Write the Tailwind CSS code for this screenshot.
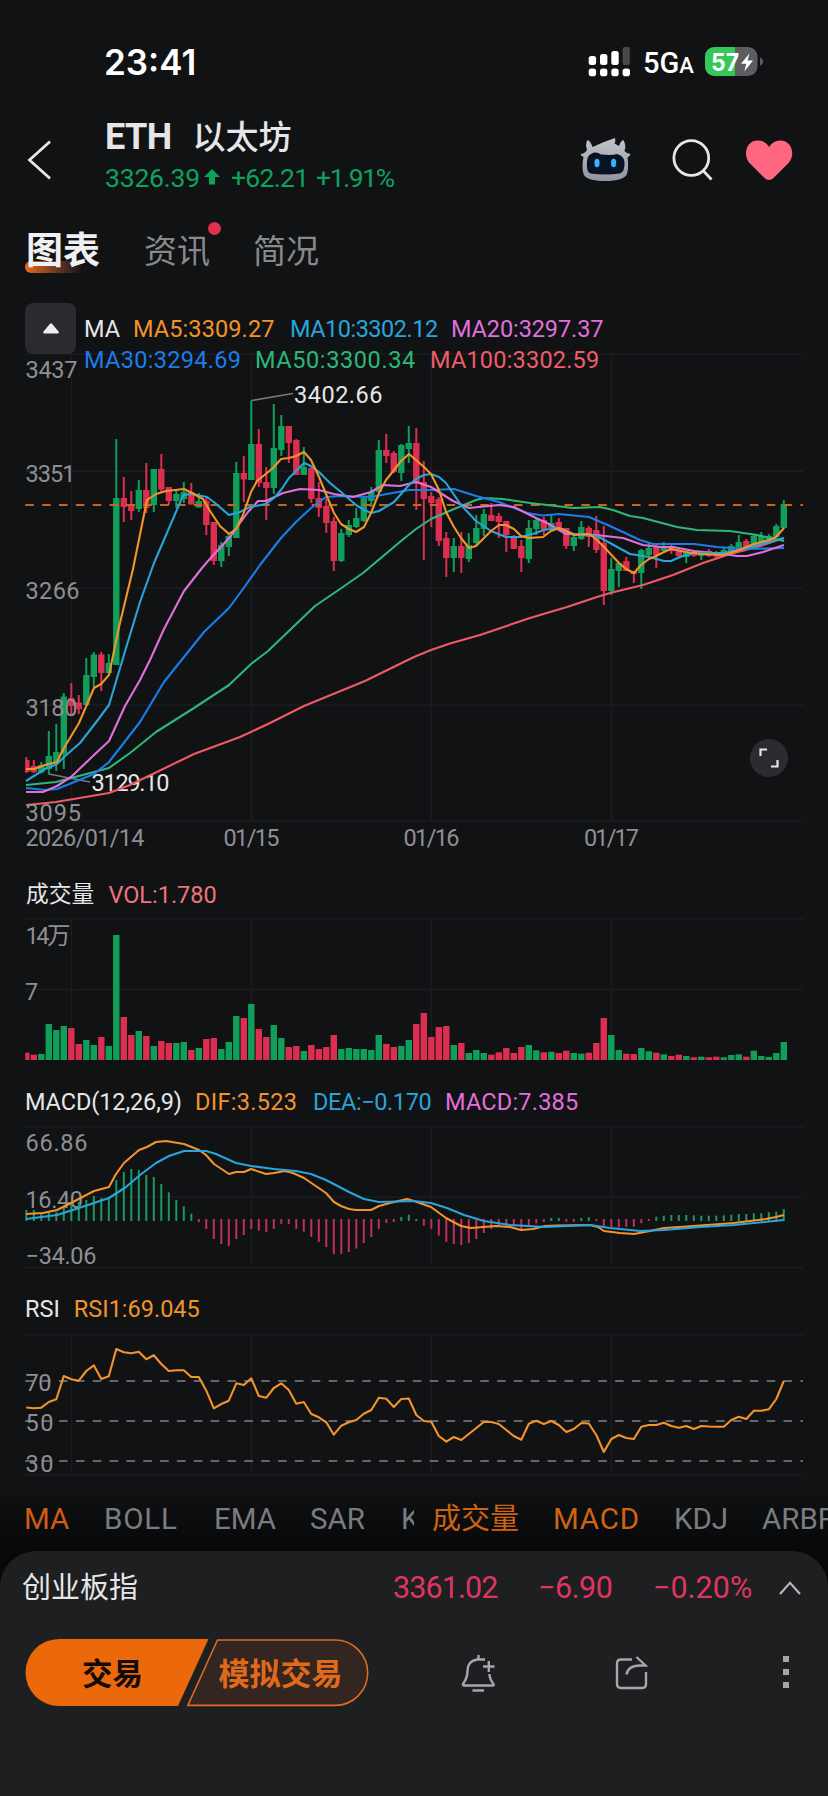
<!DOCTYPE html>
<html lang="zh-CN">
<head>
  <meta charset="UTF-8" />
  <meta name="viewport" content="width=device-width, initial-scale=1" />
  <title>ETH 以太坊</title>
  <script src="https://cdn.jsdelivr.net/npm/@tailwindcss/browser@4"></script>
</head>
<body class="bg-[#111214]">
  <div class="w-[828px] h-[1796px] overflow-hidden flex flex-col bg-[#111214] text-[#e6e6e8] font-['Roboto','Noto_Sans_CJK_SC',sans-serif]">

    <!-- Status bar -->
    <div class="h-[100px] shrink-0 flex items-center justify-between pl-[104px] pr-[64px] pt-[24px] text-white">
      <span class="font-['Inter',sans-serif] font-semibold text-[35px] leading-none">23:41</span>
      <div class="flex items-center">
        <svg class="w-[42px] h-[30px]" viewBox="589 47 42 30" fill="#fff">
          <rect x="589.7" y="56" width="7.4" height="9" rx="2.5" />
          <rect x="601" y="54" width="7.4" height="11" rx="2.5" />
          <rect x="612.3" y="51" width="7.4" height="14" rx="2.5" />
          <rect x="623.6" y="47" width="7.2" height="18" rx="2" fill="#47484a" />
          <rect x="589.7" y="68.6" width="7.4" height="7.6" rx="2.8" />
          <rect x="601" y="68.6" width="7.4" height="7.6" rx="2.8" />
          <rect x="612.3" y="68.6" width="7.4" height="7.6" rx="2.8" />
          <rect x="623.6" y="68.6" width="7.4" height="7.6" rx="2.8" />
        </svg>
        <span class="ml-[13px] w-[61px] font-medium text-[29px] leading-none whitespace-nowrap pt-[2px]">5G<span class="text-[22px]">A</span></span>
        <svg class="w-[60px] h-[30px]" viewBox="704 47 60 30">
          <rect x="705" y="47" width="52.5" height="29" rx="9.5" fill="#5c5d60" />
          <path d="M714.5 47H735V76H714.5A9.5 9.5 0 0 1 705 66.500V56.500A9.5 9.5 0 0 1 714.500 47Z" fill="#34c759" />
          <path d="M760 57.500Q763 58.500 763 61.500T760 65.500Z" fill="#5c5d60" />
          <text x="711" y="70.500" font-family="Inter" font-weight="700" font-size="24" fill="#fff" textLength="28" lengthAdjust="spacingAndGlyphs">57</text>
          <path d="M749.500 53.500L741 63.800H746.300L744.300 71.500L753 60.500H747.500Z" fill="#fff" />
        </svg>
      </div>
    </div>

    <!-- Header -->
    <header class="h-[110px] shrink-0 flex pl-[27px] pr-[35px]">
      <svg class="w-[24px] h-[40px] mt-[39.500px]" viewBox="0 0 24 40" fill="none" stroke="#e6e6e8" stroke-width="2.800"><path d="M23 1.500L2.500 20L23 38.500" /></svg>
      <div class="ml-[54px] pt-[18px]">
        <h1 class="flex items-center h-[38px] text-[36px] leading-none font-bold tracking-[-0.6px]">ETH<span class="ml-[21px] text-[33px] font-medium tracking-normal">以太坊</span></h1>
        <div class="flex items-center h-[36px] mt-[4px] text-[26.500px] leading-none text-[#0ea25f]">
          <span class="w-[99px] tracking-[-0.2px]">3326.39</span>
          <svg class="w-[16px] h-[16px] mb-[2px]" viewBox="0 0 16 16" fill="#0ea25f"><path d="M8 0L16 8H11V15.500H5V8H0Z" /></svg>
          <span class="ml-[11px] w-[85px] tracking-[-0.7px]">+62.21</span>
          <span class="tracking-[-1.4px]">+1.91%</span>
        </div>
      </div>
      <div class="ml-auto flex items-start">
        <svg class="w-[52px] h-[46px] mt-[37px]" viewBox="580 137 52 46">
          <defs>
            <linearGradient id="shell" x1="0" y1="0" x2="0" y2="1"><stop offset="0" stop-color="#c3c5cb" /><stop offset="1" stop-color="#8f949f" /></linearGradient>
          </defs>
          <path d="M587 150Q585 144 587.500 140Q590.500 141 592.500 147Q603 142 615 138Q616 141 614.500 143.500L619 146Q620.500 141 623.500 140Q626.500 146 624.500 151Q627 154 630.500 154Q629.500 157 627.500 157.500Q629 167 627 174Q624 181 605 181T583.500 174Q581.500 166 583.500 157Q581.500 156.500 580.500 154Q584.500 154 587 150Z" fill="url(#shell)" />
          <path d="M591 154Q596 151 601 154.500Q612 155.500 617 154Q624 156 624.500 162Q625 172 620 173.500Q605 175.500 590.500 173.500Q586 172 587 162Q587 156 591 154Z" fill="#0a1226" />
          <ellipse cx="597" cy="163" rx="2.600" ry="4.200" fill="#38b4f4" />
          <ellipse cx="613.600" cy="163" rx="2.600" ry="4.200" fill="#38b4f4" />
        </svg>
        <svg class="w-[42px] h-[42px] ml-[40px] mt-[39px]" viewBox="672 139 42 42" fill="none" stroke="#e6e6e8" stroke-width="2.800"><circle cx="691.300" cy="158" r="17.400" /><path d="M703 170.500L711.500 179.500" /></svg>
        <svg class="w-[48px] h-[41px] ml-[31px] mt-[40px]" viewBox="745 140 48 41" fill="#ff6680"><path d="M769 180Q766.500 180 764 177.500L749 162.500C743.500 156 745 140.500 758 140.500Q765 140.500 769 147Q773 140.500 780 140.500C793 140.500 795 156 789 162.500L774 177.500Q771.500 180 769 180Z" /></svg>
      </div>
    </header>

    <!-- Tabs -->
    <nav class="h-[80px] shrink-0 flex items-start pl-[25px] pt-[24px] text-[33px] leading-[36px] text-[#88898c]">
      <div class="relative w-[119px] text-[37px] font-bold text-[#f0f0f2]">
        <span class="absolute left-0 top-[27px] w-[58px] h-[12px] rounded-l-md bg-linear-to-r from-[#e96a10] to-[#111214]"></span>
        <span class="relative pl-[1px]">图表</span>
      </div>
      <div class="relative w-[109px]">资讯<span class="absolute left-[64px] -top-[12px] size-[13px] rounded-full bg-[#e32f4f]"></span></div>
      <div>简况</div>
    </nav>

    <!-- Candles + MA -->
    <section class="shrink-0 h-[582px]">
      <div class="relative z-10 h-[87px] pt-[13px] pl-[25px] flex text-[23.500px] leading-[31px]">
        <button class="size-[51px] rounded-lg bg-[#2a2b31] flex items-center justify-center">
          <svg class="w-[16px] h-[11px]" viewBox="0 0 16 11" fill="#eceef0"><path d="M7 .7Q8 -.3 9 .7L15.500 8.500Q16.500 10.500 14.500 10.500H1.500Q-.5 10.500.5 8.500Z" /></svg>
        </button>
        <div class="ml-[8px] pt-[11px] whitespace-nowrap">
          <div class="flex">
            <span class="w-[49px]">MA</span><span class="w-[157px] text-[#f2932c] tracking-[0.1px]">MA5:3309.27</span><span class="w-[161px] text-[#28a5da] tracking-[-0.5px]">MA10:3302.12</span><span class="text-[#e070dc] tracking-[-0.1px]">MA20:3297.37</span>
          </div>
          <div class="flex">
            <span class="w-[171px] text-[#1a7ee8] tracking-[0.3px]">MA30:3294.69</span><span class="w-[175px] text-[#2cb878] tracking-[0.600px]">MA50:3300.34</span><span class="text-[#ee5d68] tracking-[0.200px]">MA100:3302.59</span>
          </div>
        </div>
      </div>
      <div class="relative -mt-[32px]">
        <svg id="price" class="block w-[828px] h-[527px]" viewBox="0 345 828 527"></svg>
        <button class="absolute left-[750px] top-[394px] size-[38px] rounded-full bg-[#2b2c2f] flex items-center justify-center">
          <svg class="w-[20px] h-[20px]" viewBox="0 0 20 20" fill="none" stroke="#e6e6e8" stroke-width="2.200"><path d="M1.500 8V1.500H8M18.500 12V18.500H12" /></svg>
        </button>
      </div>
    </section>

    <!-- Volume -->
    <section class="shrink-0">
      <div class="h-[45px] flex items-center gap-[14px] pl-[26px] pt-[2px] text-[23.500px] leading-none">
        <span class="text-[22.800px]">成交量</span><span class="text-[#ee737d]">VOL:1.780</span>
      </div>
      <svg id="volume" class="block w-[828px] h-[162px]" viewBox="0 917 828 162"></svg>
    </section>

    <!-- MACD -->
    <section class="shrink-0">
      <div class="h-[45px] flex items-center pl-[25px] pt-[2px] text-[23.500px] leading-none whitespace-nowrap">
        <span class="w-[170px] tracking-[-0.1px]">MACD(12,26,9)</span><span class="w-[118px] text-[#f2932c] tracking-[0.300px]">DIF:3.523</span><span class="w-[132px] text-[#28a5da] tracking-[-0.400px]">DEA:−0.170</span><span class="text-[#e070dc] tracking-[0.200px]">MACD:7.385</span>
      </div>
      <svg id="macd" class="block w-[828px] h-[163px]" viewBox="0 1124 828 163"></svg>
    </section>

    <!-- RSI -->
    <section class="shrink-0">
      <div class="h-[44px] flex items-center gap-[14px] pl-[25px] pt-[2px] text-[23.500px] leading-none">
        <span>RSI</span><span class="text-[#f2932c]">RSI1:69.045</span>
      </div>
      <svg id="rsi" class="block w-[828px] h-[152px]" viewBox="0 1331 828 152"></svg>
    </section>

    <!-- Indicator picker, bottom sheet -->
    <div class="grow flex flex-col bg-linear-to-b from-[#111214] to-[#070809] to-[68px]">
      <div class="h-[68px] shrink-0 flex items-center pt-[3px] text-[29.500px] leading-[36px] text-[#7b7c80]">
        <div class="w-[414px] flex overflow-hidden pl-[24px] whitespace-nowrap">
          <span class="w-[80px] shrink-0 text-[#cf5c14]">MA</span><span class="w-[110px] shrink-0 tracking-[0.800px]">BOLL</span><span class="w-[96px] shrink-0">EMA</span><span class="w-[91px] shrink-0">SAR</span><span class="shrink-0">K</span>
        </div>
        <div class="w-[414px] flex overflow-hidden pl-[18px] whitespace-nowrap">
          <span class="w-[121px] shrink-0 text-[29px] text-[#cf6410]">成交量</span><span class="w-[121px] shrink-0 text-[#cf6410] tracking-[0.800px]">MACD</span><span class="w-[88px] shrink-0">KDJ</span><span class="shrink-0">ARBR</span>
        </div>
      </div>

      <footer class="grow rounded-t-[36px] bg-[#1d1f20]">
        <div class="h-[72px] flex items-center pl-[22px] pr-[27px] pt-[2px] text-[30.500px] leading-none text-[#df3560] whitespace-nowrap">
          <span class="text-[29px] text-[#e6e6e8]">创业板指</span>
          <span class="ml-auto w-[145px] tracking-[-0.900px]">3361.02</span>
          <span class="w-[115px] tracking-[-0.500px]">−6.90</span>
          <span class="w-[126px]">−0.20%</span>
          <svg class="w-[22px] h-[14px]" viewBox="0 0 22 14" fill="none" stroke="#b5b6b9" stroke-width="2.200"><path d="M1 13L11 1.800L21 13" /></svg>
        </div>
        <div class="h-[100px] flex items-center pl-[25px] pr-[39px]">
          <svg class="w-[345px] h-[68px] -mt-[1px]" viewBox="25 1639 345 68" font-weight="700">
            <path d="M59 1639H208.500L178 1706H59A33.500 33.500 0 0 1 59 1639Z" fill="#eb690b" />
            <path d="M217.500 1640H335A32.700 32.700 0 0 1 335 1705.400H187.800Z" fill="#33251f" stroke="#dc6c22" stroke-width="1.600" />
            <text x="82" y="1684.500" font-size="30.500" fill="#120a05">交易</text>
            <text x="218.500" y="1684.500" font-size="31" fill="#e06a1b">模拟交易</text>
          </svg>
          <svg class="ml-[91px] w-[34px] h-[38px]" viewBox="461 1653 34 38" fill="none" stroke="#a6a7aa" stroke-width="2.400">
            <path d="M478.500 1654V1658M485 1658.500H477Q467.500 1660 467.500 1670Q467.500 1677 463 1683Q463 1684.500 464 1684.500H493Q494 1684.500 493.500 1683Q489.500 1678 489.500 1673M472.500 1689.500H484M488.800 1660V1671M483 1665.500H494.500" />
          </svg>
          <svg class="ml-[119px] w-[36px] h-[36px]" viewBox="614 1655 36 36" fill="none" stroke="#a6a7aa" stroke-width="2.400">
            <path d="M632 1659.500H621Q617 1659.500 617 1663.500V1684Q617 1688 621 1688H642Q646 1688 646 1684V1672M636.500 1657L645.500 1665.500H640Q628 1665.500 626.500 1674.500" />
          </svg>
          <div class="ml-auto -mt-[2px] flex flex-col gap-[7px]">
            <i class="size-[6px] bg-[#a6a7aa]"></i><i class="size-[6px] bg-[#a6a7aa]"></i><i class="size-[6px] bg-[#a6a7aa]"></i>
          </div>
        </div>
      </footer>
    </div>
  </div>

  <script>
    const GREEN = "#0f9f5b", RED = "#dc2e50", ORANGE = "#f2932c", CYAN = "#28a5da";
    const days = [71.5, 251.5, 431.2, 611.5];
    const cx = i => 26.3 + 7.5 * i;

    // [up, high, body top, body bottom, low]
    const candles = [
      [0,757,760,772,773],[0,760,766,772,773],[1,762,765,772.5,773.5],[1,731,756,769,774.5],[1,724,752,763,771],[1,693,696.5,754,769],
      [0,683,698,706,714],[0,695,702.5,709,714],[1,658,675,705,705],[1,652,654.5,677,688],[0,652,654.5,673,691],[1,654,663,673,674],
      [1,439,498,665,665],[0,477,498,507,522],[0,491,504,511,520],[1,480,490,509,512],[0,463,490,508,513],[1,469,469,505,512],
      [0,454,469,489.5,492],[0,487,487,501,505],[1,490,494,501,508],[1,482,492,499,503],[0,483,492,504.5,504.5],[1,493,501,507.5,507.5],
      [0,497,501,525,535],[0,522,522,561,565],[1,542,545,561,567],[1,535,536,547,556],[1,462,473,538,538],[0,456,473,479.5,502],
      [1,400.5,444,480,480],[0,429,444,483,487],[0,467,482,488,520],[1,404,448,488,494],[1,415,426,450,456],[0,426,426,443,463],
      [0,439,440,475,475],[1,447,467,475,475],[0,467,468,499,503],[0,482,498,508,517],[0,499,506,523,533],[0,517,521,561,571],
      [1,529,533,561,562],[1,520,525,535,537],[1,508,518,527,528],[1,496,498,521,522],[1,487,492,501,507],[1,440,450,492,492],
      [0,434,450,456,463],[0,451,453,472,473],[1,444,445,473,481],[1,426,443,449,463],[0,428,443,483,510],[0,461,482,499,560],
      [0,492,496,503,527],[0,497,499,541,546],[0,532,538,558,577],[1,538,546,558,572],[0,532,546,558,573],[1,533,545,559,562],
      [1,515,528,543,545],[1,509,514,529,536],[0,503,515,521,521],[0,513,516,522,538],[0,521,521,535,552],[0,535,537,549,549],
      [0,540,546,558,572],[1,520,528,559,563],[1,518,520,529,535],[0,517,520,529,535],[1,515,523,528,530],[0,518,522,528,531],
      [0,528,528,546,549],[1,535,537,546,551],[1,521,527,539,540],[0,526,528,537,547],[0,516,530,550,553],[0,526,543,591,605],
      [1,558,569,591,595],[1,562,563,571,587],[0,557,561,571,571],[0,571,571,574,583],[1,549,550,573,589],[1,542,548,555,557],
      [0,544,546,555,568],[1,542,546,551,552],[0,545,546,551,554],[0,548,550,556,557],[1,550,552,557,563],[0,551,552,556,557],
      [1,551,552,556,560],[0,549,551,556,557],[0,551,552,557,558],[1,548,550,556,557],[1,544,546,552,552],[1,535,542,548,549],
      [0,539,541,548,548],[1,535,536,545,546],[1,532,536,543,543],[1,534,536,542,542],[1,524,526,537,537],[1,500,504,528,529]
    ];

    const volumes = [7.3,5.3,6,36,30,34,32,16,20,15,23,14,125,43,25,29,24,14,19,17,17,18,10,12,21,22,11,18,44,42,56,31,23,35,22,13,14,9,15,11,13,25,11,12,11,11,10,25,16,13,14,20,36,47,23,33,34,15,17,7,10,7,5.3,7.7,12,7,13,15,9.7,7.7,8.3,7,9.3,7,6.3,7.3,17,42,25,10,6.3,6,12,8.7,7.3,5.7,4,5.3,4,2.7,3.3,2.7,3.3,2.7,5,5.7,3.3,9.3,4,3,7,18];

    const hist = [11,11,8.7,8.7,9.3,14,17,19,21,25,23,23,41,49,52,51,46,44,37,28.7,21,14.7,7.3,-3,-10,-20,-25,-27,-20,-16,-10,-11.7,-13,-10,-5,-5,-10,-12.7,-18,-23,-28,-35,-35,-33,-29.7,-24,-18,-9.7,-4,-3,4,6.3,2,-6.7,-9.7,-16.7,-23,-25,-26,-24,-20,-14,-10,-7.7,-7,-7.3,-11.7,-7.7,-4.3,-3,3,3,-2.7,-2.7,3,3.7,-2,-7.7,-8.3,-8.3,-7.7,-7.7,-4.3,-2,4.3,5.3,6,6,6,5.7,5.3,5.3,5.3,5.7,6.3,7,7,7.7,7.7,8.7,9.3,12];

    const rsi = [1407.5,1408.3,1407.7,1402,1399.3,1376,1379.3,1380.7,1371,1365.3,1379,1376.3,1349,1352.3,1353.3,1351.7,1359.3,1355.3,1364,1371,1370.3,1370.3,1377,1377,1390.7,1408.3,1404,1400.7,1383.3,1385,1378.3,1396,1397.7,1388,1383.3,1390,1403.7,1402,1414,1417.3,1422.3,1434.7,1425.7,1422.3,1420,1413.7,1410,1397.7,1398.7,1407,1399,1398.5,1415,1421,1421.7,1436,1441.7,1437,1440,1434,1428,1422,1422,1424,1430,1436,1439.7,1423.7,1420.7,1424,1421,1425,1432,1429,1423,1423.5,1435,1452,1439,1435,1438,1439,1426.7,1425,1425,1422.7,1426,1427.7,1426,1429,1426,1426.5,1426.7,1426.7,1420,1416.7,1419,1410.7,1410.7,1409.3,1399,1381];

    const ma = {
      "#ef5a66": "26,805 56,802 109,793 130,785 194,754 240,737 268,724 304,706 365,681 414,657 431,650 450,643.500 480,635 530,618 567,607 597,597 610,593 643,585 673,575 703,563 730,554 757,547 784,538",
      "#2cb878": "26,785 56,782 94,772 109,768 130,753 156,732 194,708 229,685 251,664 268,651 315,606 340,589 363,573 401,541 416,529 431,519 454,509 476,500 484,498 503,499 530,503 573,508 600,507 613,510 630,516 643,518 677,527 697,530 730,531 757,535 770,538 784,541",
      "#1a7ee8": "26,788 45,790 57,789 94,774 109,762 140,722 164,682 204,632 229,608 243,589 260,565 281,538 296,522 311,508 326,497 340,496 371,497 387,494 409,490 431,490 454,489 476,496 499,502 514,508 527,513 543,515.500 559,514 589,517 610,526 640,540 653,544 694,544 717,547 747,549 784,548",
      "#e070dc": "26,792 43,792 57,786 71,777 94,755 109,741 125,706 140,680 150,660 164,629 184,591 202,568 208,561 230,537 240,523 248,512 258,501 266,501 283,493 300,489 319,490 334,494 353,497 371,492 383,485 400,486 416,482 431,487 453,501 469,508 499,505 514,507 536,518 547,523 566,534 596,535 623,538 643,545 660,547 673,547 694,551 724,554 737,556 747,556 763,552 784,545",
      "#28a5da": "26,781 45,769 57,764 64,757 80,743 94,725 109,705 126,648 140,602 154,563 182,498 184,495 192,494 207,497 215,503 229,515 240,512 250,507 266,504 274,498 281,490 289,478 304,463 311,466 319,472 330,483 341,492 356,505 364,510 371,513 379,511 394,502 409,485 416,479 424,475 431,474 439,477 446,483 461,505 476,521 491,531 506,537 521,537 536,533 543,530 559,528 574,534 597,536 610,543 630,554 649,557 664,561 671,561 680,557 694,553 724,553 747,548 784,538",
      "#f2932c": "26,769 34,769 45,765 57,762 64,748 79,723 94,688 101,684 109,675 119,627 133,569 147,500 156,494 166,491 184,489 192,493 203,499 210,511 220,526 229,534 236,529 243,515 251,492 257,481 267,473 273,468 281,459 289,458 296,456 304,452 311,460 319,477 326,494 334,513 341,524 349,529 356,532 364,527 371,513 379,493 386,480 394,470 401,461 409,454 416,460 424,467 431,474 439,490 446,512 454,527 461,538 469,548 476,546 484,538 491,531 499,525 506,525 514,529 521,536 529,538 543,537 551,531 559,528 566,531 574,535 589,534 596,539 604,547 619,563 626,569 634,573 641,565 649,559 656,556 664,552 671,549 686,552 701,554 724,555 739,550 754,544 769,540 776,537 784,528"
    };
    const dif = "26,1214 43,1213 57,1210 71,1203 94,1191 109,1187 116,1174 124,1163 139,1150 147,1147 156,1142 166,1141 184,1144 199,1150 206,1155 214,1164 229,1174 236,1172 244,1172 251,1169 266,1174 274,1173 285,1171 293,1173 304,1178 326,1193 334,1202 341,1206 349,1209 356,1210 371,1210 379,1206 390,1203 407,1199 414,1201 431,1207 446,1218 461,1226 471,1228 496,1226 510,1227 521,1230 533,1229 545,1226 558,1225.500 590,1225 598,1227 604,1231 620,1233 634,1234 650,1231 664,1228 680,1227 734,1223 766,1219 776,1217 784,1215";
    const dea = "26,1219 57,1215 79,1208 109,1198 126,1187 140,1175 156,1163 169,1156 184,1151 206,1151 216,1154 236,1163 251,1166 274,1169 296,1171 311,1174 326,1180 349,1192 364,1199 379,1202 414,1201 431,1203 447,1208 464,1215 484,1221 510,1225 545,1227 590,1225 610,1228 640,1231 664,1230 700,1227 734,1225 784,1220";

    const seg = (x1, y1, x2, y2, color, w = 1.5, extra = "") =>
      `<line x1="${x1}" y1="${y1}" x2="${x2}" y2="${y2}" stroke="${color}" stroke-width="${w}" ${extra}/>`;
    const poly = (pts, color) =>
      `<polyline points="${pts}" fill="none" stroke="${color}" stroke-width="2.1" stroke-linejoin="round"/>`;
    const label = (x, y, s, w, color = "#8e8f92") =>
      `<text x="${x}" y="${y}" font-size="23.5" fill="${color}" textLength="${w}">${s}</text>`;
    const grid = (rows, bottom) =>
      rows.map(y => seg(25, y, 803, y, "#1b1d1f")).join("") +
      days.map(x => seg(x, rows[0], x, bottom, "#1b1d1f")).join("");
    const bar = (i, y, h, color) => {
      const x = Math.max(25.3, cx(i) - 3.2);
      return `<rect x="${x}" y="${y}" width="${cx(i) + 3.2 - x}" height="${Math.max(h, 1)}" fill="${color}"/>`;
    };

    // price
    let out = grid([354, 471.3, 588, 705, 821], 821);
    candles.forEach(([up, hi, top, bot, lo], i) => {
      const c = up ? GREEN : RED;
      out += seg(cx(i), hi, cx(i), lo, c, 2) + bar(i, top, bot - top, c);
    });
    out += seg(25.3, 505, 803, 505, "#cc6414", 1.8, 'stroke-dasharray="8.6 8.25"');
    out += seg(251.5, 400.5, 293, 393.5, "#76777a", 1.6) + label(294, 402.5, "3402.66", 88.5, "#e6e6e8");
    out += seg(49, 774, 90, 782, "#76777a", 1.6) + label(91.5, 790.7, "3129.10", 78, "#e6e6e8");
    for (const c in ma) out += poly(ma[c], c);
    out += label(25.5, 378.3, "3437", 52) + label(25.5, 482.3, "3351", 50) + label(25.5, 599.3, "3266", 54)
      + label(25.5, 716, "3180", 52) + label(25.5, 820.7, "3095", 55.500)
      + label(25.5, 845.7, "2026/01/14", 119) + label(223.5, 845.7, "01/15", 56)
      + label(403.5, 845.7, "01/16", 56) + label(584, 845.7, "01/17", 55);
    document.getElementById("price").innerHTML = out;

    // volume
    document.getElementById("volume").innerHTML = grid([919, 989.5], 1060)
      + volumes.map((h, i) => bar(i, 1060 - h, h, candles[i][0] ? GREEN : RED)).join("")
      + label(25.5, 943.7, "14万", 45) + label(25, 999.7, "7", 13);

    // macd
    document.getElementById("macd").innerHTML = grid([1127, 1197, 1267.5], 1264)
      + label(25.5, 1151, "66.86", 62) + label(25.5, 1208, "16.40", 57.5) + label(25.5, 1264, "−34.06", 71)
      + hist.map((h, i) => h > 0
        ? seg(cx(i), 1221, cx(i), 1221 - h, "#1a9960", 2)
        : seg(cx(i), 1219, cx(i), 1219 - h, "#c0305a", 2)).join("")
      + poly(dif, ORANGE) + poly(dea, CYAN);

    // rsi
    document.getElementById("rsi").innerHTML = grid([1335, 1475], 1475)
      + [1381, 1421, 1461].map(y => seg(25.3, y, 803, y, "#64666b", 1.8, 'stroke-dasharray="8.6 8.25"')).join("")
      + label(25.5, 1391, "70", 26) + label(25.5, 1431.3, "50", 28) + label(25.5, 1471.5, "30", 28)
      + poly(rsi.map((y, i) => cx(i) + "," + y).join(" "), ORANGE);
  </script>
</body>
</html>
